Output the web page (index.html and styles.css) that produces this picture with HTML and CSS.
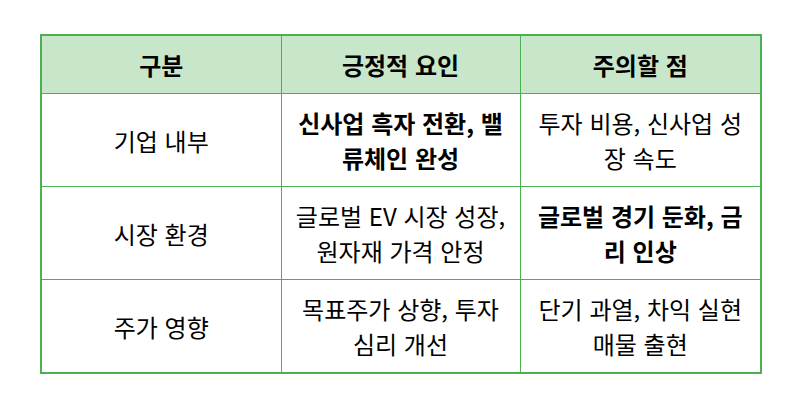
FILE: index.html
```html
<!DOCTYPE html>
<html lang="ko">
<head>
<meta charset="utf-8">
<link rel="stylesheet" href="styles.css">
</head>
<body>
<table class="grid">
  <colgroup><col class="c1"><col class="c2"><col class="c3"></colgroup>
  <thead>
    <tr class="head"><th>구분</th><th>긍정적 요인</th><th>주의할 점</th></tr>
  </thead>
  <tbody>
    <tr class="row"><td>기업 내부</td><td class="b">신사업 흑자 전환, 밸류체인 완성</td><td>투자 비용, 신사업 성장 속도</td></tr>
    <tr class="row"><td>시장 환경</td><td>글로벌 EV 시장 성장, 원자재 가격 안정</td><td class="b">글로벌 경기 둔화, 금리 인상</td></tr>
    <tr class="row"><td>주가 영향</td><td>목표주가 상향, 투자 심리 개선</td><td>단기 과열, 차익 실현 매물 출현</td></tr>
  </tbody>
</table>
</body>
</html>
```
FILE: styles.css
```css
html, body { margin: 0; padding: 0; background: #fff; }
body { padding: 34px 0 0 40px; font-family: "Noto Sans CJK KR", "Noto Sans", sans-serif; color: #000; }
.grid { border-collapse: collapse; width: 720px; table-layout: fixed; border: 2px solid #4caf50; }
.c1 { width: 240px; }
.c2 { width: 239px; }
.c3 { width: 241px; }
.grid th, .grid td { border: 1px solid #4caf50; text-align: center; vertical-align: middle; padding: 0 8px; font-size: 24px; line-height: 35px; }
.head th { background: #c8e6c9; height: 57px; font-weight: 700; }
.row td { height: 92px; font-weight: 400; }
.row td.b { font-weight: 700; }
```
